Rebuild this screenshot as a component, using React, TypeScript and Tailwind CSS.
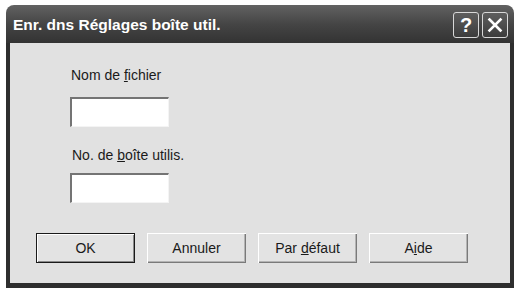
import React from "react";

const font = { fontFamily: '"Liberation Sans", Arial, sans-serif' };

function Btn({ children, def }: { children: React.ReactNode; def?: boolean }) {
  return (
    <div
      className={
        "w-[99px] h-[30px] flex items-center justify-center bg-[#e3e3e3] text-[14px] leading-4 text-[#1a1a1a] " +
        (def
          ? "border border-[#1a1a1a] shadow-[inset_1px_1px_#ffffff,inset_-1px_-1px_#8a8a8a]"
          : "shadow-[inset_1px_1px_#ffffff,inset_-1px_-1px_#7a7a7a,inset_-2px_-2px_#b4b4b4]")
      }
    >
      {children}
    </div>
  );
}

function Field() {
  return (
    <div className="w-[99px] h-[30px] bg-white border-t-2 border-l-2 border-[#747474] border-b border-r border-b-[#f4f4f4] border-r-[#f4f4f4]" />
  );
}

export default function App() {
  return (
    <div className="w-[517px] h-[290px] bg-white pt-[5px] pl-[6px]" style={font}>
      <div className="w-[508px] h-[283px] flex flex-col">
        <div className="h-[38px] rounded-t-[8px] bg-gradient-to-b from-[#626262] via-[#454545] to-[#333333] flex items-center pl-[7px] pr-[6px]">
          <span className="text-white font-bold text-[15.5px] leading-5 mt-[1px] tracking-[0px]">
            Enr. dns Réglages boîte util.
          </span>
          <div className="ml-auto flex gap-[3px] mt-[1px]">
            <div className="w-[26px] h-[26px] rounded-[3px] border border-[#d8d8d8] bg-gradient-to-b from-[#5e5e5e] to-[#3c3c3c] flex items-center justify-center text-white font-bold text-[20px] leading-none">
              ?
            </div>
            <div className="w-[26px] h-[26px] rounded-[3px] border border-[#d8d8d8] bg-gradient-to-b from-[#5e5e5e] to-[#3c3c3c] flex items-center justify-center">
              <svg width="16" height="16" viewBox="0 0 16 16">
                <path d="M2.5 2.5 L13.5 13.5 M13.5 2.5 L2.5 13.5" stroke="#ffffff" strokeWidth="2.6" strokeLinecap="square" />
              </svg>
            </div>
          </div>
        </div>
        <div className="flex-1 border-x-4 border-b-[5px] border-[#2e2e2e] flex">
          <div className="flex-1 bg-[#e1e1e1] flex flex-col pl-[60px] pt-[24px] text-[14px] leading-4 text-[#1a1a1a]">
            <div className="ml-[1px]">
              Nom de <u>f</u>ichier
            </div>
            <div className="mt-[14px]">
              <Field />
            </div>
            <div className="mt-[20px] ml-[2px]">
              No. de <u>b</u>oîte utilis.
            </div>
            <div className="mt-[10px]">
              <Field />
            </div>
            <div className="mt-[30px] -ml-[34px] flex gap-[12px]">
              <Btn def>OK</Btn>
              <Btn>Annuler</Btn>
              <Btn>
                <span>
                  Par <u>d</u>éfaut
                </span>
              </Btn>
              <Btn>
                <span>
                  A<u>i</u>de
                </span>
              </Btn>
            </div>
          </div>
        </div>
      </div>
    </div>
  );
}
